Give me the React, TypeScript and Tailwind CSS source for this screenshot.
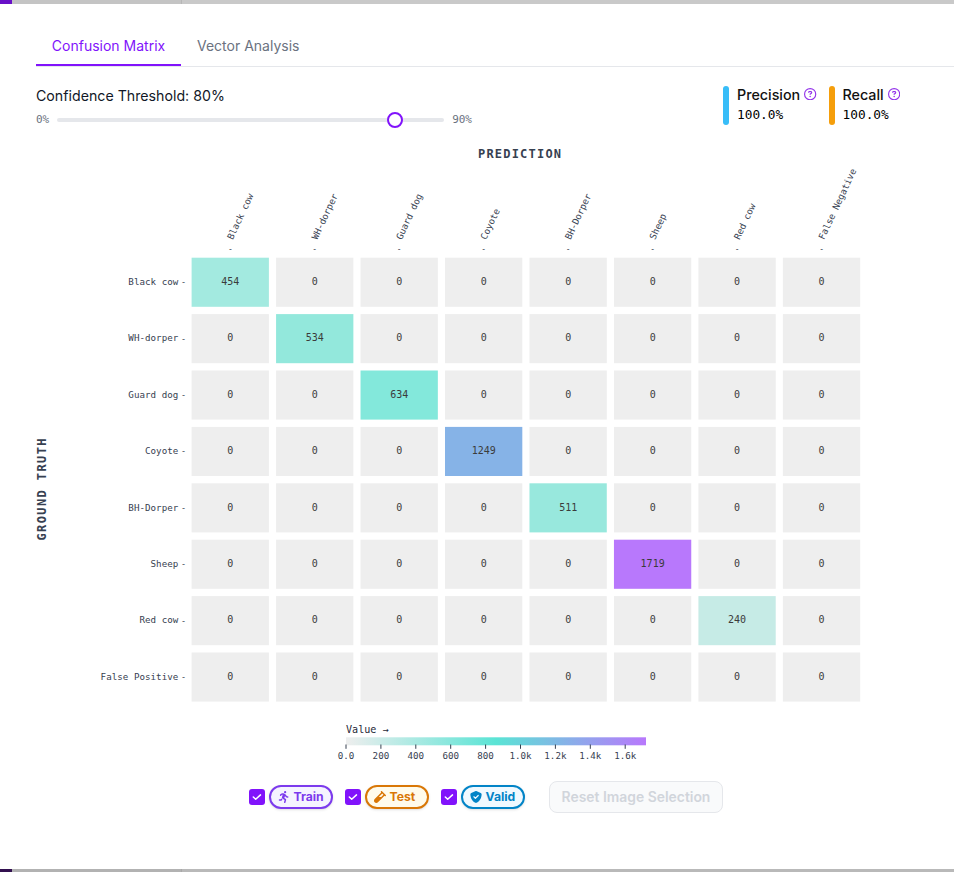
import React from "react";
import { FaPersonRunning, FaVial, FaRegCircleQuestion } from "react-icons/fa6";

const LABELS = ["Black cow", "WH-dorper", "Guard dog", "Coyote", "BH-Dorper", "Sheep", "Red cow"];
const ROWS = [...LABELS, "False Positive"];
const COLS = [...LABELS, "False Negative"];
const DIAGONAL = [
  { value: 454, color: "#a3eae0" },
  { value: 534, color: "#93e8dc" },
  { value: 634, color: "#83e8db" },
  { value: 1249, color: "#86b3e7" },
  { value: 511, color: "#98e8dd" },
  { value: 1719, color: "#b878fc" },
  { value: 240, color: "#c6ebe6" },
  { value: 0, color: "#eeeeee" },
];
const TICKS = ["0.0", "200", "400", "600", "800", "1.0k", "1.2k", "1.4k", "1.6k"];

function Matrix() {
  const cx = (i: number) => 230.3 + i * 84.47;
  const cy = (i: number) => 282.2 + i * 56.4;
  return (
    <svg viewBox="64 164 820 544" width="820" height="544" className="block shrink-0 font-['DejaVu_Sans_Mono',monospace]">
      {COLS.map((label, i) => (
        <g key={label}>
          <text
            transform={`translate(${cx(i) + 2.4},${240.3}) rotate(-65)`}
            fontSize="9.2"
            textLength={label.length * 5.5}
            fill="#374151"
          >
            {label}
          </text>
          <text x={cx(i)} y={252} fontSize="8" textAnchor="middle" fill="#374151">
            -
          </text>
        </g>
      ))}
      {ROWS.map((label, r) => (
        <g key={label}>
          <text x={178.3} y={cy(r) + 2.7} fontSize="9.2" textAnchor="end" textLength={label.length * 5.55} fill="#374151">
            {label}
          </text>
          <text x={183.5} y={cy(r) + 3} fontSize="8.4" textAnchor="middle" fill="#374151">
            -
          </text>
          {COLS.map((_, c) => (
            <g key={c}>
              <rect
                x={cx(c) - 38.7}
                y={cy(r) - 24.5}
                width="77.3"
                height="49.1"
                fill={r === c ? DIAGONAL[r].color : "#eeeeee"}
              />
              <text x={cx(c)} y={cy(r) + 2.8} fontSize="10" textAnchor="middle" fill="#3b3b3b">
                {r === c ? DIAGONAL[r].value : 0}
              </text>
            </g>
          ))}
        </g>
      ))}
    </svg>
  );
}

function Legend() {
  return (
    <svg viewBox="330 720 330 44" width="330" height="44" className="block font-['DejaVu_Sans_Mono',monospace]">
      <defs>
        <linearGradient id="scale">
          <stop offset="0" stopColor="#eeeeee" />
          <stop offset="0.5" stopColor="#5ae4d5" />
          <stop offset="1" stopColor="#b878fc" />
        </linearGradient>
      </defs>
      <text x="346" y="733" fontSize="10.1" fill="#1f2937">Value →</text>
      <rect x="346" y="737.3" width="300" height="8" fill="url(#scale)" />
      {TICKS.map((t, i) => (
        <g key={t}>
          <path d={`M${346 + i * 34.9} 744.5v4.3`} stroke="#374151" />
          <text x={346 + i * 34.9} y="759" fontSize="9.2" textAnchor="middle" fill="#374151">{t}</text>
        </g>
      ))}
    </svg>
  );
}

function ShieldCheck() {
  return (
    <svg viewBox="0 0 512 512" className="size-3">
      <path
        fill="currentColor"
        d="M256 0c4.6 0 9.2 1 13.4 2.9L457.7 82.8c22 9.3 38.4 31 38.3 57.2-.5 99.2-41.3 280.7-213.6 363.2-16.7 8-36.1 8-52.8 0C57.3 420.7 16.5 239.2 16 140c-.1-26.2 16.3-47.9 38.3-57.2L242.7 2.9C246.8 1 251.4 0 256 0z"
      />
      <path d="M167 247l64 64 120-120" fill="none" stroke="#f0f9ff" strokeWidth="50" strokeLinecap="round" strokeLinejoin="round" />
    </svg>
  );
}

function Metric({ label, bar }: { label: string; bar: string }) {
  return (
    <div className="flex gap-2">
      <div className={`h-[39px] w-1.5 rounded-full ${bar}`} />
      <div>
        <div className="flex h-[18px] gap-1 leading-[18px] font-medium text-[#111111]">
          <span className="text-[14.3px]">{label}</span>
          <FaRegCircleQuestion className="mt-[1.5px] size-[12.3px] text-[#9333ea]" />
        </div>
        <div className="mt-[1px] font-['DejaVu_Sans_Mono',monospace] text-[12.8px] leading-5 text-black">100.0%</div>
      </div>
    </div>
  );
}

function Filter({ label, tone, icon }: { label: string; tone: string; icon: React.ReactNode }) {
  return (
    <label className="flex items-center gap-1">
      <span className="flex size-4 items-center justify-center rounded-[3px] bg-[#8113fb]">
        <svg viewBox="0 0 16 16" className="size-4" fill="none" stroke="white" strokeWidth="1.5" strokeLinecap="round" strokeLinejoin="round">
          <path d="M4.3 8l2.4 2.3 4.8-4.4" />
        </svg>
      </span>
      <span className={`flex h-6 w-16 items-center justify-start gap-1 rounded-full border-2 pl-[6.5px] text-[12.2px] font-bold shadow-sm ${tone}`}>
        {icon}
        {label}
      </span>
    </label>
  );
}

export default function App() {
  return (
    <div className="flex h-[872px] w-[954px] flex-col overflow-hidden bg-white font-['Inter',sans-serif]">
      <div className="flex h-1 shrink-0 bg-[#c9c9c9]">
        <div className="w-3 bg-[#6810c8]" />
        <div className="w-[170px] border-r border-[#b7b7b7] bg-[#c4c4c4]" />
      </div>
      <div className="flex h-[865px] shrink-0 flex-col">
        <div className="mt-[22px] ml-9 flex h-[41px] shrink-0 border-b border-[#e5e7eb] text-sm">
          <div className="flex h-10 w-[145px] items-center justify-center border-b-2 border-[#8113fb] pt-px text-[#8113fb]">
            Confusion Matrix
          </div>
          <div className="flex h-10 items-center px-4 pb-px text-[#6b7280]">Vector Analysis</div>
        </div>
        <div className="flex h-[76px] shrink-0 justify-between pr-[54px] pl-9">
          <div className="w-[436px] pt-[19px]">
            <div className="h-5 text-[14.2px] leading-5 text-[#111827]">Confidence Threshold: 80%</div>
            <div className="mt-[6px] flex h-4 items-center gap-2 font-['DejaVu_Sans_Mono',monospace] text-[11px] text-[#6b7280]">
              <span>0%</span>
              <div className="relative h-1 flex-1 rounded-full bg-[#e5e7eb]">
                <div className="absolute -top-1.5 left-[329.5px] size-4 rounded-full border-2 border-[#8113fb] bg-white" />
              </div>
              <span>90%</span>
            </div>
          </div>
          <div className="flex gap-3 pt-[19px]">
            <Metric label="Precision" bar="bg-[#38bdf8]" />
            <Metric label="Recall" bar="bg-[#f59e0b]" />
          </div>
        </div>
        <div className="flex h-[21px] shrink-0 items-center pl-[478px] font-['DejaVu_Sans_Mono',monospace] text-[12px] font-bold tracking-[1.2px] text-[#374151]">
          PREDICTION
        </div>
        <div className="flex h-[544px] shrink-0 items-center">
          <div className="flex w-16 shrink-0 items-center pt-[106px] pl-[33px]">
            <div className="rotate-180 font-['DejaVu_Sans_Mono',monospace] text-[12px] leading-[18px] font-bold tracking-[1.4px] whitespace-nowrap text-[#374151] [writing-mode:vertical-rl]">
              GROUND TRUTH
            </div>
          </div>
          <Matrix />
        </div>
        <div className="mt-3 ml-[330px]">
          <Legend />
        </div>
        <div className="mt-[17px] ml-[249px] flex items-center gap-3">
          <Filter label="Train" tone="border-[#7c3aed] bg-[#f5f3ff] text-[#7c3aed]" icon={<FaPersonRunning className="size-3" />} />
          <Filter label="Test" tone="border-[#d97706] bg-[#fffbeb] text-[#d97706]" icon={<FaVial className="size-3" />} />
          <Filter label="Valid" tone="border-[#0284c7] bg-[#f0f9ff] text-[#0284c7]" icon={<ShieldCheck />} />
          <button className="ml-3 h-8 w-[174px] rounded-lg border border-[#e5e7eb] bg-[#f9fafb] text-[13.9px] font-semibold text-[#d1d5db]">
            Reset Image Selection
          </button>
        </div>
      </div>
      <div className="flex h-[3px] shrink-0 bg-[#b9b9b9]">
        <div className="w-3 bg-[#32104f]" />
        <div className="w-[170px] border-r border-[#a8a8a8] bg-[#b2b2b2]" />
      </div>
    </div>
  );
}
